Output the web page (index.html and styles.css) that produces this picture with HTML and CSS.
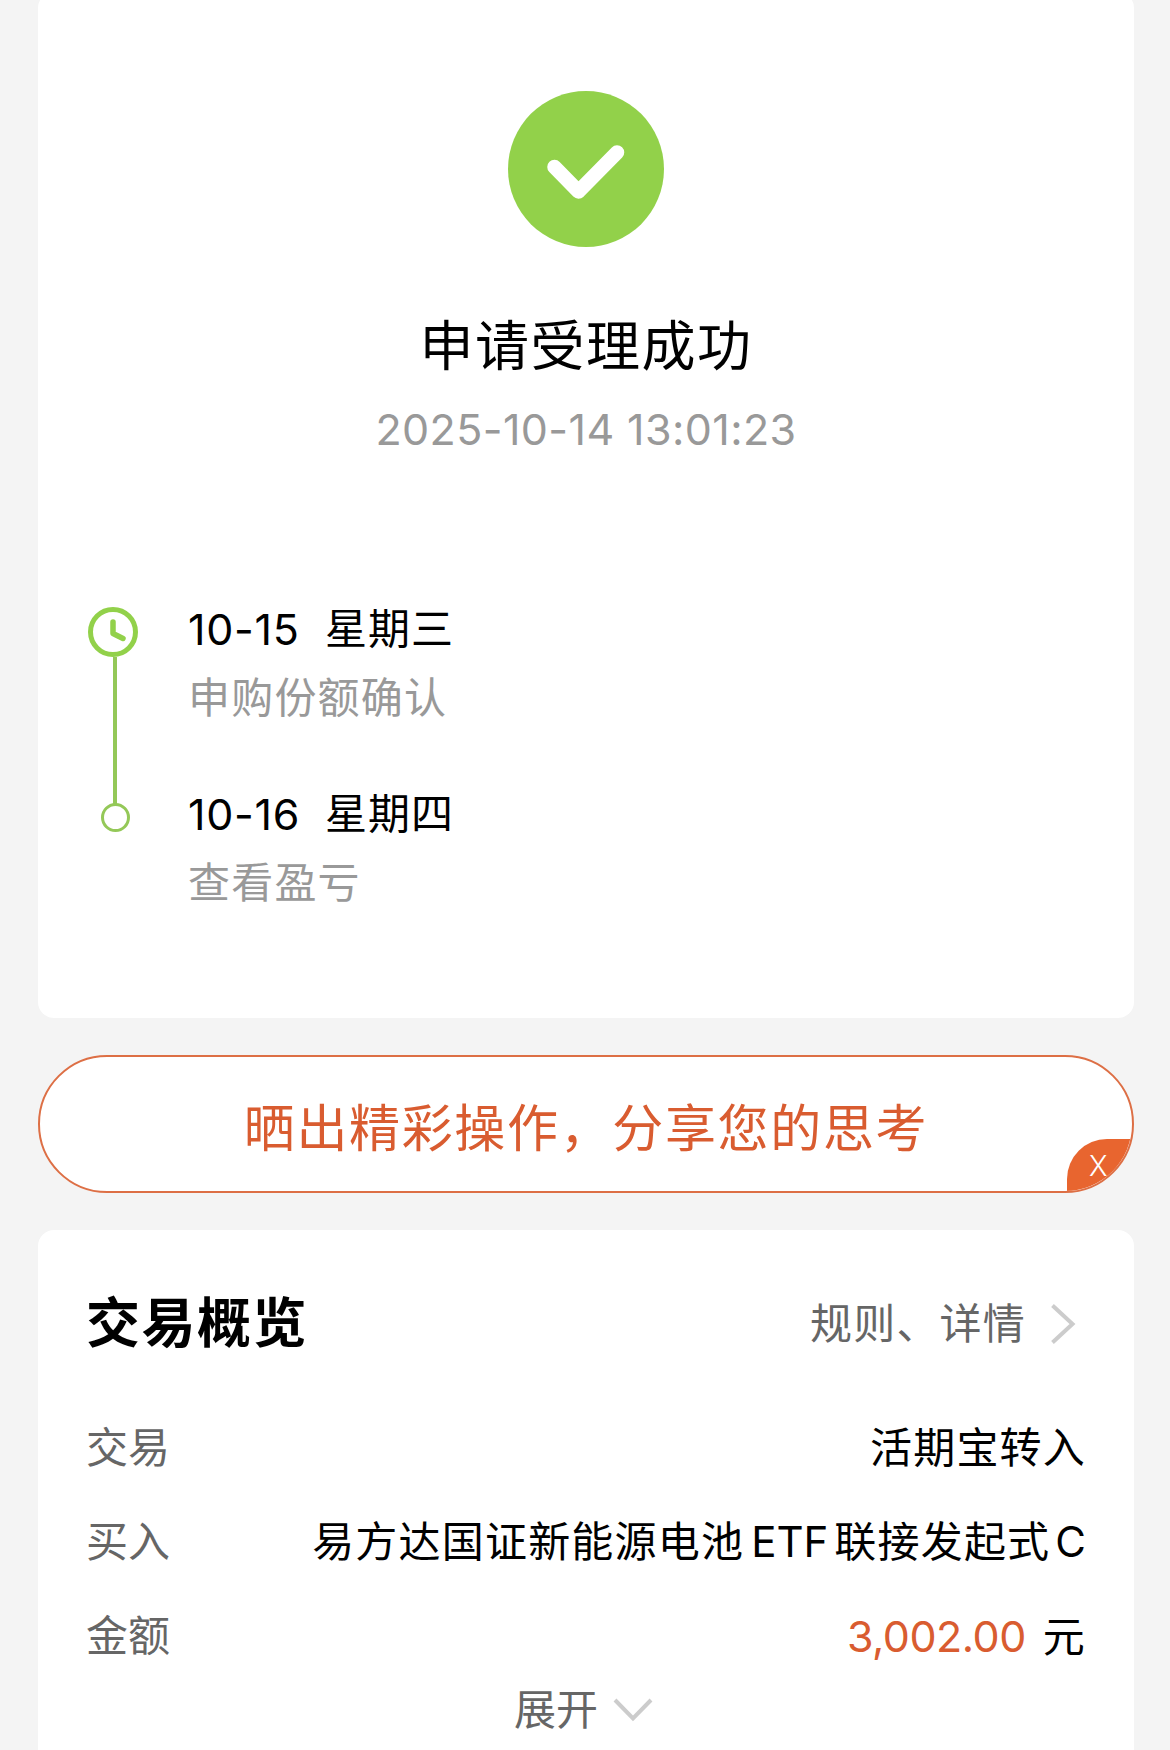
FILE: index.html
```html
<!DOCTYPE html>
<html lang="zh-CN">
<head>
    <meta charset="UTF-8">
    <meta name="viewport" content="width=device-width, initial-scale=1.0">
    <title>申请受理成功</title>
    <link rel="stylesheet" href="styles.css">
</head>
<body>
<div class="page">
    <div class="card result">
        <svg class="result-icon" viewBox="0 0 156 156">
            <circle cx="78" cy="78" r="78" fill="#92d14a"/>
            <path d="M46.500 76 L70.500 100.500 L109 61.500" fill="none" stroke="#fff" stroke-width="14.500" stroke-linecap="round" stroke-linejoin="round"/>
        </svg>
        <h1>申请受理成功</h1>
        <div class="result-time">2025-10-14 13:01:23</div>

        <div class="timeline">
            <div class="step">
                <div class="marker">
                    <svg class="clock" viewBox="0 0 50 50">
                        <circle cx="25" cy="25" r="22.500" fill="none" stroke="#92d14a" stroke-width="5"/>
                        <path d="M25 15 V26.500 L35 31.500" fill="none" stroke="#92d14a" stroke-width="5.500" stroke-linecap="round" stroke-linejoin="round"/>
                    </svg>
                    <div class="line"></div>
                </div>
                <div class="step-text">
                    <div class="step-date"><span class="num">10-15</span><span>星期三</span></div>
                    <div class="step-desc">申购份额确认</div>
                </div>
            </div>
            <div class="step">
                <div class="marker">
                    <div class="dot"></div>
                </div>
                <div class="step-text">
                    <div class="step-date"><span class="num">10-16</span><span>星期四</span></div>
                    <div class="step-desc">查看盈亏</div>
                </div>
            </div>
        </div>
    </div>

    <div class="share">
        <span class="share-text">晒出精彩操作，分享您的思考</span>
        <div class="share-close">X</div>
    </div>

    <div class="card overview">
        <div class="overview-head">
            <h2>交易概览</h2>
            <div class="more">
                <span>规则、详情</span>
                <svg class="chevron-right" viewBox="0 0 26 42">
                    <path d="M2.500 2.500 L22.500 21 L2.500 39.500" fill="none" stroke="#ccc" stroke-width="4"/>
                </svg>
            </div>
        </div>
        <div class="row">
            <span class="label">交易</span>
            <span class="value">活期宝转入</span>
        </div>
        <div class="row">
            <span class="label">买入</span>
            <span class="value">易方达国证新能源电池<span class="latin etf">ETF</span>联接发起式<span class="latin last">C</span></span>
        </div>
        <div class="row">
            <span class="label">金额</span>
            <span class="value"><span class="amount">3,002.00</span>元</span>
        </div>
        <div class="expand">
            <span>展开</span>
            <svg class="chevron-down" viewBox="0 0 40 24">
                <path d="M2 2 L20 20.500 L38 2" fill="none" stroke="#ccc" stroke-width="4"/>
            </svg>
        </div>
    </div>
</div>
</body>
</html>
```
FILE: styles.css
```css
* {
    box-sizing: border-box;
}

body {
    margin: 0;
    height: 1750px;
    overflow: hidden;
    background: #f4f4f4;
    color: #000;
    font-family: Inter, "Noto Sans CJK SC", sans-serif;
    font-size: 42px;
    line-height: 60px;
}

h1, h2 {
    margin: 0;
}

.page {
    display: flex;
    flex-direction: column;
    gap: 37px;
    padding: 0 36px 0 38px;
    margin-top: -8px;
}

.card {
    background: #fff;
    border-radius: 16px;
}

.result {
    height: 1026px;
    padding: 99px 49px 0;
    display: flex;
    flex-direction: column;
    align-items: center;
}

.result-icon {
    width: 156px;
    height: 156px;
}

h1 {
    margin-top: 60px;
    font-size: 54px;
    font-weight: 400;
    line-height: 80px;
    letter-spacing: 1.5px;
}

.result-time {
    margin-top: 12px;
    color: #999;
    font-size: 43px;
    letter-spacing: 0.4px;
}

.timeline {
    align-self: stretch;
    margin-top: 139px;
}

.step {
    display: flex;
    height: 185px;
}

.marker {
    width: 54px;
    margin-right: 47px;
    display: flex;
    flex-direction: column;
    align-items: center;
}

.clock {
    flex: none;
    width: 50px;
    height: 50px;
    margin: 9px 3px 0 0;
}

.line {
    flex: none;
    width: 4px;
    height: 147px;
    margin-left: 2px;
    background: #94c858;
}

.dot {
    width: 29px;
    height: 29px;
    margin: 20px 0 0 3px;
    border: 3px solid #94c858;
    border-radius: 50%;
}

.step-date {
    display: flex;
    gap: 26px;
    padding-top: 1px;
    letter-spacing: 1px;
    white-space: nowrap;
}

.num {
    width: 111px;
    font-size: 43px;
    letter-spacing: 0.7px;
}

.step-desc {
    margin-top: 9px;
    color: #999;
    letter-spacing: 1.2px;
}

.share {
    position: relative;
    height: 138px;
    display: flex;
    align-items: center;
    justify-content: center;
    overflow: hidden;
    background: #fff;
    border: 2px solid #dd6f45;
    border-radius: 69px;
}

.share-text {
    padding-top: 9px;
    color: #d95c30;
    font-size: 51px;
    letter-spacing: 1.65px;
}

.share-close {
    position: absolute;
    right: -2px;
    bottom: -2px;
    width: 67px;
    height: 54px;
    padding-left: 22px;
    background: #e8652f;
    border-top-left-radius: 40px;
    color: #fff;
    font-size: 28px;
    font-weight: 300;
    line-height: 55px;
}

.overview {
    height: 560px;
    padding: 54px 49px 0 48px;
}

.overview-head {
    display: flex;
    justify-content: space-between;
    align-items: center;
    height: 80px;
    margin-bottom: 37px;
}

h2 {
    font-size: 54px;
    font-weight: 700;
    letter-spacing: 1.5px;
}

.more {
    display: flex;
    align-items: center;
    margin-right: 9px;
    color: #666;
    letter-spacing: 1.2px;
}

.chevron-right {
    width: 26px;
    height: 42px;
    margin-left: 24px;
}

.row {
    display: flex;
    justify-content: space-between;
    align-items: center;
    height: 94px;
}

.label {
    color: #666;
}

.value {
    margin-right: -1px;
    letter-spacing: 1.2px;
}

.latin {
    font-size: 42px;
    letter-spacing: 0;
}

.etf {
    margin: 0 6px 0 7px;
}

.last {
    margin-left: 5px;
}

.amount {
    margin-right: 17px;
    color: #d95c30;
    font-size: 43px;
    letter-spacing: -0.5px;
}

.expand {
    display: flex;
    align-items: center;
    justify-content: center;
    height: 54px;
    padding-right: 4px;
    color: #666;
}

.chevron-down {
    width: 40px;
    height: 24px;
    margin-left: 15px;
}
```
